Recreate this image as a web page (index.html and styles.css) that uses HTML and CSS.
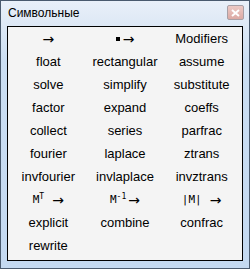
FILE: index.html
```html
<!DOCTYPE html>
<html>
<head>
<meta charset="utf-8">
<link rel="stylesheet" href="styles.css">
</head>
<body>
<div class="window">
  <div class="titlebar">
    <span class="title">Символьные</span>
    <span class="close"><svg width="9" height="8" viewBox="0 0 9 8"><path d="M1 1 L8 7 M8 1 L1 7" stroke="#fff" stroke-width="2"/></svg></span>
  </div>
  <div class="panel">
    <div class="grid">
      <div class="cell"><span class="arrow">→</span></div>
      <div class="cell"><span class="sq"></span><span class="arrow">→</span></div>
      <div class="cell">Modifiers</div>
      <div class="cell">float</div>
      <div class="cell">rectangular</div>
      <div class="cell">assume</div>
      <div class="cell">solve</div>
      <div class="cell">simplify</div>
      <div class="cell">substitute</div>
      <div class="cell">factor</div>
      <div class="cell">expand</div>
      <div class="cell">coeffs</div>
      <div class="cell">collect</div>
      <div class="cell">series</div>
      <div class="cell">parfrac</div>
      <div class="cell">fourier</div>
      <div class="cell">laplace</div>
      <div class="cell">ztrans</div>
      <div class="cell">invfourier</div>
      <div class="cell">invlaplace</div>
      <div class="cell">invztrans</div>
      <div class="cell"><span class="m">M<sup>T</sup></span><span class="arrow gap">→</span></div>
      <div class="cell"><span class="m">M<sup>-1</sup></span><span class="arrow">→</span></div>
      <div class="cell"><span class="m">|M|</span><span class="arrow gap">→</span></div>
      <div class="cell">explicit</div>
      <div class="cell">combine</div>
      <div class="cell">confrac</div>
      <div class="cell">rewrite</div>
      <div class="cell"></div>
      <div class="cell"></div>
    </div>
  </div>
</div>
</body>
</html>
```
FILE: styles.css
```css
html, body {
  margin: 0;
  padding: 0;
  background: #fff;
}
.window {
  box-sizing: border-box;
  width: 250px;
  height: 269px;
  border: 1px solid #4a5a6e;
  background: linear-gradient(#e9f0f9 0px, #dde8f5 24px, #cbdef2 60px, #c4d9f1 100%);
  padding: 0 6px 7px 6px;
  display: flex;
  flex-direction: column;
  font-family: "Liberation Sans", Arial, sans-serif;
}
.titlebar {
  height: 25px;
  display: flex;
  align-items: center;
  justify-content: space-between;
  flex: none;
}
.title {
  font-family: "Liberation Sans", Arial, sans-serif;
  font-size: 12px;
  color: #000;
  padding-left: 1px;
  margin-top: -1px;
}
.close {
  box-sizing: border-box;
  width: 17px;
  height: 15px;
  border: 1px solid #a8a0a6;
  border-radius: 2px;
  background: linear-gradient(#ecc9c5, #dcaaa4);
  display: flex;
  align-items: center;
  justify-content: center;
  margin-right: -1px;
  margin-top: -2px;
}
.panel {
  flex: 1;
  border: 1px solid #000;
  background: #f4f4f4;
  padding: 0 2px;
}
.grid {
  display: grid;
  grid-template-columns: 1fr 1fr 1fr;
  grid-auto-rows: 23px;
}
.cell {
  display: flex;
  align-items: center;
  justify-content: center;
  font-size: 13px;
  color: #000;
  white-space: nowrap;
}
.arrow {
  font-family: "DejaVu Sans", sans-serif;
  font-size: 14px;
  line-height: 1;
}
.arrow.gap {
  margin-left: 6px;
}
.sq {
  display: inline-block;
  width: 4px;
  height: 4px;
  background: #000;
  margin-right: 3px;
}
.m {
  font-family: "DejaVu Sans Mono", monospace;
  font-size: 11px;
  margin-right: 2px;
}
.m sup {
  font-size: 8px;
  vertical-align: 4px;
  line-height: 0;
}
```
